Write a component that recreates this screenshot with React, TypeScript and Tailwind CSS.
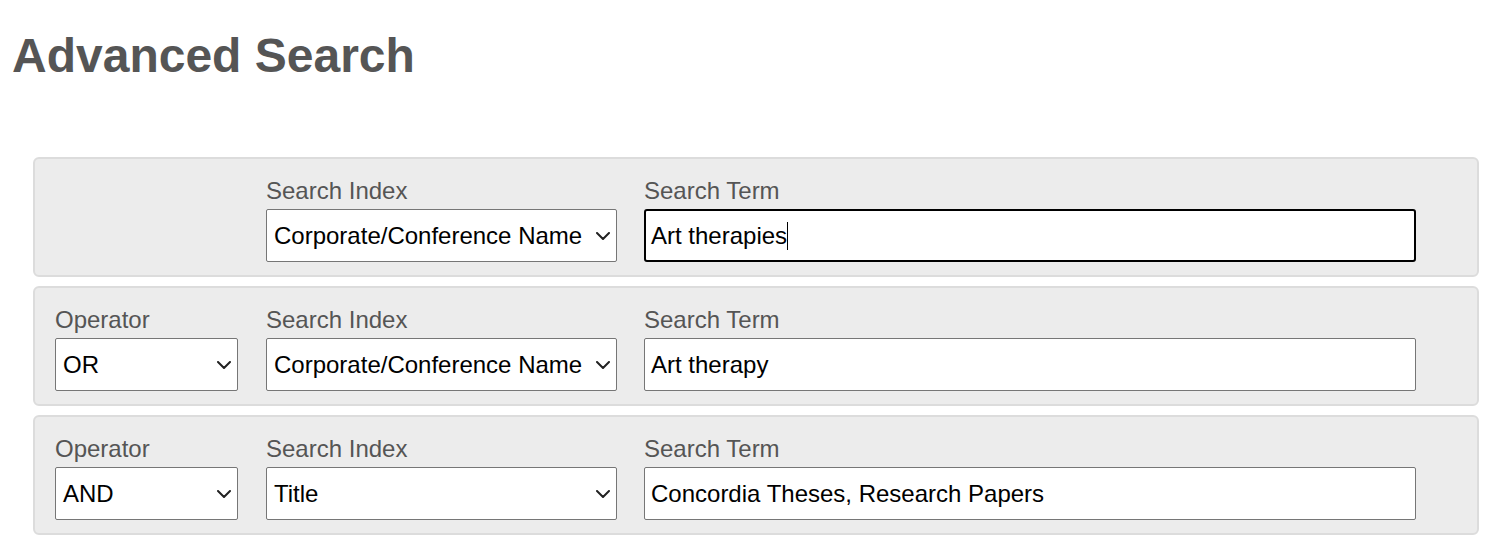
import { ReactNode } from "react";

type Row = {
  operator?: string;
  index: string;
  term: string;
  focused?: boolean;
};

const rows: Row[] = [
  { index: "Corporate/Conference Name", term: "Art therapies", focused: true },
  { operator: "OR", index: "Corporate/Conference Name", term: "Art therapy" },
  { operator: "AND", index: "Title", term: "Concordia Theses, Research Papers" },
];

function Chevron() {
  return (
    <svg width="14" height="8" viewBox="0 0 14 8" fill="none" className="shrink-0">
      <path d="M1 1l6 6 6-6" stroke="#222" strokeWidth="2" strokeLinecap="round" strokeLinejoin="round" />
    </svg>
  );
}

function Field({ label, width, children }: { label: string; width: string; children: ReactNode }) {
  return (
    <div className={`flex flex-col ${width}`}>
      <label className="h-[36px] text-[24px] leading-[36px] text-[#555]">{label}</label>
      {children}
    </div>
  );
}

function FakeSelect({ value }: { value: string }) {
  return (
    <div className="flex h-[53px] items-center justify-between rounded-[2px] border border-[#767676] bg-white pl-[7px] pr-[6px] text-[24px] text-black">
      <span className="whitespace-nowrap">{value}</span>
      <Chevron />
    </div>
  );
}

function TermInput({ value, focused }: { value: string; focused?: boolean }) {
  return (
    <div
      className={`flex h-[53px] items-center bg-white text-[24px] text-black ${
        focused ? "rounded-[3px] border-2 border-black pl-[5px]" : "rounded-[2px] border border-[#767676] pl-[6px]"
      }`}
    >
      <span className="whitespace-nowrap">{value}</span>
      {focused && <span className="h-[28px] w-px bg-black" />}
    </div>
  );
}

function SearchRow({ row }: { row: Row }) {
  return (
    <div className="flex h-[120px] gap-[28px] rounded-[6px] border-2 border-[#dcdcdc] bg-[#ececec] pl-[20px] pt-[14px]">
      <div className="w-[183px]">
        {row.operator && (
          <Field label="Operator" width="w-[183px]">
            <FakeSelect value={row.operator} />
          </Field>
        )}
      </div>
      <Field label="Search Index" width="w-[351px]">
        <FakeSelect value={row.index} />
      </Field>
      <div className="-ml-px">
        <Field label="Search Term" width="w-[772px]">
          <TermInput value={row.term} focused={row.focused} />
        </Field>
      </div>
    </div>
  );
}

export default function App() {
  return (
    <div className="min-h-[546px] bg-white font-['Liberation_Sans',Arial,sans-serif]">
      <h1 className="pl-[12px] pt-[32px] text-[48px] font-bold leading-none text-[#555]">Advanced Search</h1>
      <div className="ml-[33px] mt-[77px] flex w-[1446px] flex-col gap-[9px]">
        {rows.map((row, i) => (
          <SearchRow key={i} row={row} />
        ))}
      </div>
    </div>
  );
}
